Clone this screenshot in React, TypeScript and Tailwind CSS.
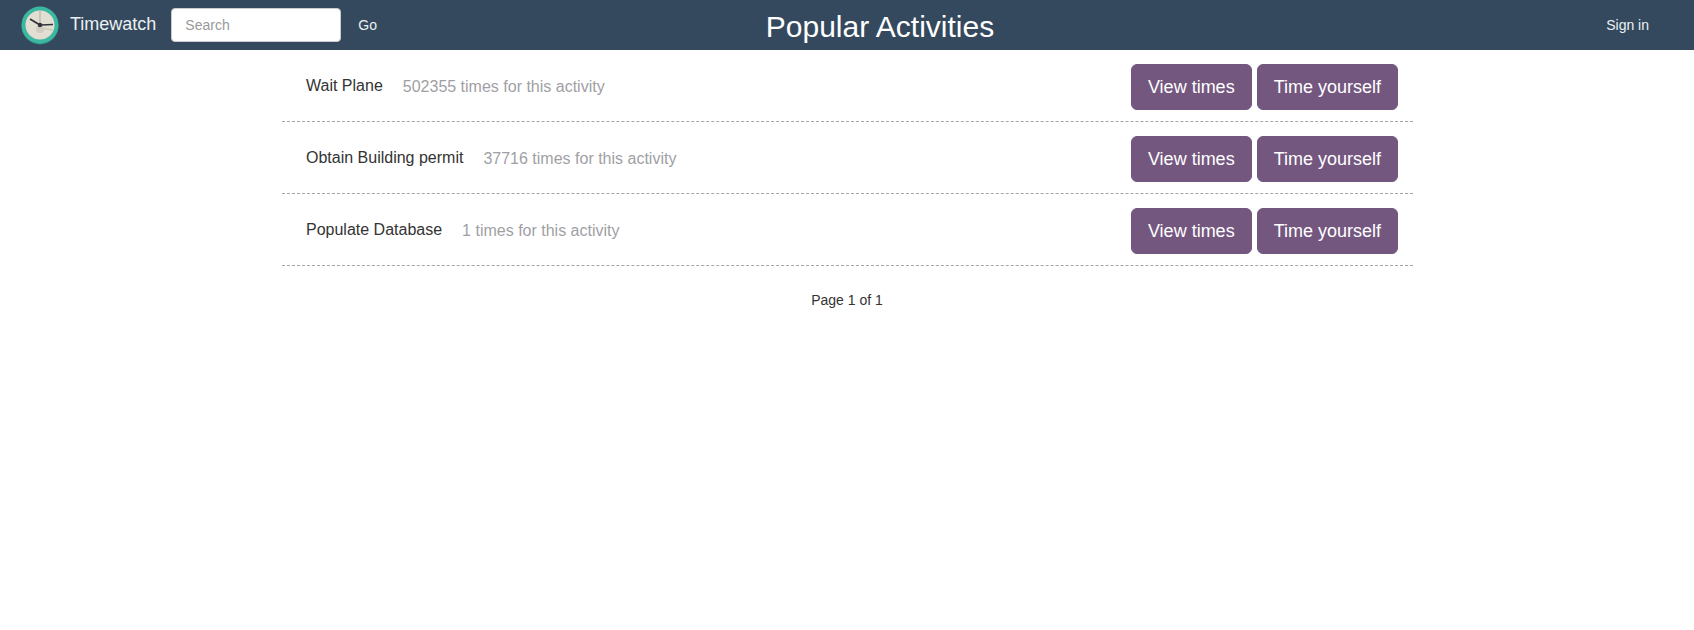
const rows = [
  { name: "Wait Plane", count: "502355 times for this activity" },
  { name: "Obtain Building permit", count: "37716 times for this activity" },
  { name: "Populate Database", count: "1 times for this activity" },
];

function Clock() {
  return (
    <svg width="40" height="40" viewBox="0 0 40 40" className="shrink-0">
      <circle cx="20" cy="21" r="18.5" fill="#2a8f7e" />
      <circle cx="20" cy="20" r="18.5" fill="#3db8a0" />
      <circle cx="20" cy="20" r="14.5" fill="#e2dfd2" />
      <path d="M20 6v14" stroke="#b5b5ad" strokeWidth="1.2" />
      <path d="M20 23l13 2" stroke="#cdcabe" strokeWidth="1.5" />
      <circle cx="20" cy="24" r="4" fill="#d0cdc1" />
      <path d="M10 14l10 6" stroke="#33333b" strokeWidth="1.8" />
      <path d="M20 20l13-.5" stroke="#33333b" strokeWidth="1.3" />
      <circle cx="20" cy="20" r="2.2" fill="#33333b" />
    </svg>
  );
}

function Btn({ children }: { children: string }) {
  return (
    <button className="h-[46px] px-[16px] rounded-[6px] bg-[#74577f] text-white text-[18px] leading-[24px] border border-[#74577f]">
      {children}
    </button>
  );
}

export default function App() {
  return (
    <div className="min-h-[630px] bg-white text-[14px] text-[#333] [font-family:'Liberation_Sans',Arial,sans-serif]">
      <nav className="relative h-[50px] bg-[#34495e] flex items-center pl-[20px] pr-[45px] text-white">
        <Clock />
        <span className="ml-[10px] text-[18px] leading-[20px] text-[#ecf0f1] -mt-[2px]">Timewatch</span>
        <input
          placeholder="Search"
          className="ml-[15px] w-[170px] h-[34px] rounded-[4px] bg-white border border-[#ccc] px-[13px] text-[14px] text-[#555] placeholder:text-[#999]"
        />
        <span className="ml-[17px] text-[#ecf0f1]">Go</span>
        <h1 className="absolute left-0 right-0 top-[10px] text-center text-[30px] leading-[33px] font-normal text-white pl-[66px]">
          Popular Activities
        </h1>
        <span className="ml-auto text-[#ecf0f1]">Sign in</span>
      </nav>
      <main className="w-[1131px] ml-[282px]">
        {rows.map((r) => (
          <div
            key={r.name}
            className="h-[72px] border-b border-dashed border-[#9fa8a5] flex items-start pt-[14px] pl-[24px] pr-[15px]"
          >
            <div className="h-[46px] flex items-center text-[16px]">
              <span className="text-[#333] -mt-[2px]">{r.name}</span>
              <span className="ml-[20px] text-[#a09fa5]">{r.count}</span>
            </div>
            <div className="ml-auto flex gap-[5px]">
              <Btn>View times</Btn>
              <Btn>Time yourself</Btn>
            </div>
          </div>
        ))}
        <p className="mt-[24px] text-center text-[14px] leading-[20px] text-[#333] pr-[1px]">Page 1 of 1</p>
      </main>
    </div>
  );
}
